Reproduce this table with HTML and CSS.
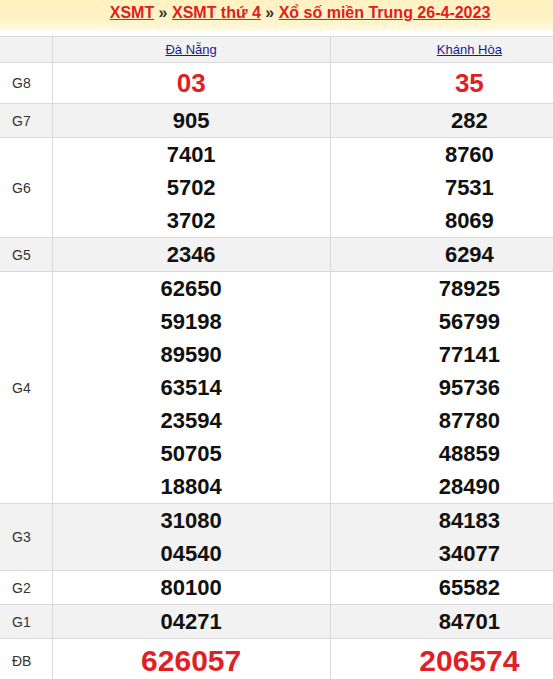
FILE: index.html
```html
<!DOCTYPE html>
<html lang="vi">
<head>
<meta charset="utf-8">
<link rel="stylesheet" href="styles.css">
</head>
<body>
<div class="page">
  <div class="title">
    <a href="#">XSMT</a> » <a href="#">XSMT thứ 4</a> » <a href="#">Xổ số miền Trung 26-4-2023</a>
  </div>
  <table class="kq">
    <colgroup><col class="c-lbl"><col class="c-prov"><col class="c-prov"></colgroup>
    <tr class="head">
      <td class="lbl"></td>
      <td><a href="#">Đà Nẵng</a></td>
      <td><a href="#">Khánh Hòa</a></td>
    </tr>
    <tr class="g8">
      <td class="lbl">G8</td>
      <td><div class="n red">03</div></td>
      <td><div class="n red">35</div></td>
    </tr>
    <tr class="alt">
      <td class="lbl">G7</td>
      <td><div class="n">905</div></td>
      <td><div class="n">282</div></td>
    </tr>
    <tr>
      <td class="lbl">G6</td>
      <td><div class="n">7401</div><div class="n">5702</div><div class="n">3702</div></td>
      <td><div class="n">8760</div><div class="n">7531</div><div class="n">8069</div></td>
    </tr>
    <tr class="alt">
      <td class="lbl">G5</td>
      <td><div class="n">2346</div></td>
      <td><div class="n">6294</div></td>
    </tr>
    <tr>
      <td class="lbl">G4</td>
      <td><div class="n">62650</div><div class="n">59198</div><div class="n">89590</div><div class="n">63514</div><div class="n">23594</div><div class="n">50705</div><div class="n">18804</div></td>
      <td><div class="n">78925</div><div class="n">56799</div><div class="n">77141</div><div class="n">95736</div><div class="n">87780</div><div class="n">48859</div><div class="n">28490</div></td>
    </tr>
    <tr class="alt">
      <td class="lbl">G3</td>
      <td><div class="n">31080</div><div class="n">04540</div></td>
      <td><div class="n">84183</div><div class="n">34077</div></td>
    </tr>
    <tr>
      <td class="lbl">G2</td>
      <td><div class="n">80100</div></td>
      <td><div class="n">65582</div></td>
    </tr>
    <tr class="alt">
      <td class="lbl">G1</td>
      <td><div class="n">04271</div></td>
      <td><div class="n">84701</div></td>
    </tr>
    <tr class="db">
      <td class="lbl">ĐB</td>
      <td><div class="n red">626057</div></td>
      <td><div class="n red">206574</div></td>
    </tr>
  </table>
</div>
</body>
</html>
```
FILE: styles.css
```css
html, body {
  margin: 0;
  padding: 0;
  background: #fff;
  font-family: "Liberation Sans", Arial, sans-serif;
}
.page {
  width: 609px;
}
.title {
  height: 31px;
  box-sizing: border-box;
  padding-top: 3px;
  padding-right: 9px;
  text-align: center;
  font-size: 16px;
  font-weight: bold;
  line-height: 19px;
  color: #333;
  background: linear-gradient(#fff1c0 0%, #fff3c9 70%, #fffaea 100%);
  margin-bottom: 5px;
}
.title a {
  color: #e0201c;
  text-decoration: underline;
}
.kq {
  border-collapse: collapse;
  width: 609px;
  table-layout: fixed;
}
.c-lbl { width: 52px; }
.c-prov { width: 278px; }
.kq td {
  border: 1px solid #d9d9d9;
  padding: 0;
  text-align: center;
  vertical-align: middle;
}
.kq td.lbl {
  border-left: none;
  text-align: left;
  padding-left: 12px;
  font-size: 14px;
  color: #333;
}
.head td {
  background: #f2f2f2;
  height: 25px;
  font-size: 13px;
}
.head a {
  color: #1a1a8c;
  text-decoration: underline;
}
.alt td {
  background: #f2f2f2;
}
.n {
  font-size: 22px;
  font-weight: bold;
  line-height: 33px;
  color: #111;
}
.n.red {
  color: #e01f26;
}
.g8 .n {
  font-size: 26px;
  line-height: 40px;
}
.db .n {
  font-size: 30px;
  line-height: 44px;
}
```
